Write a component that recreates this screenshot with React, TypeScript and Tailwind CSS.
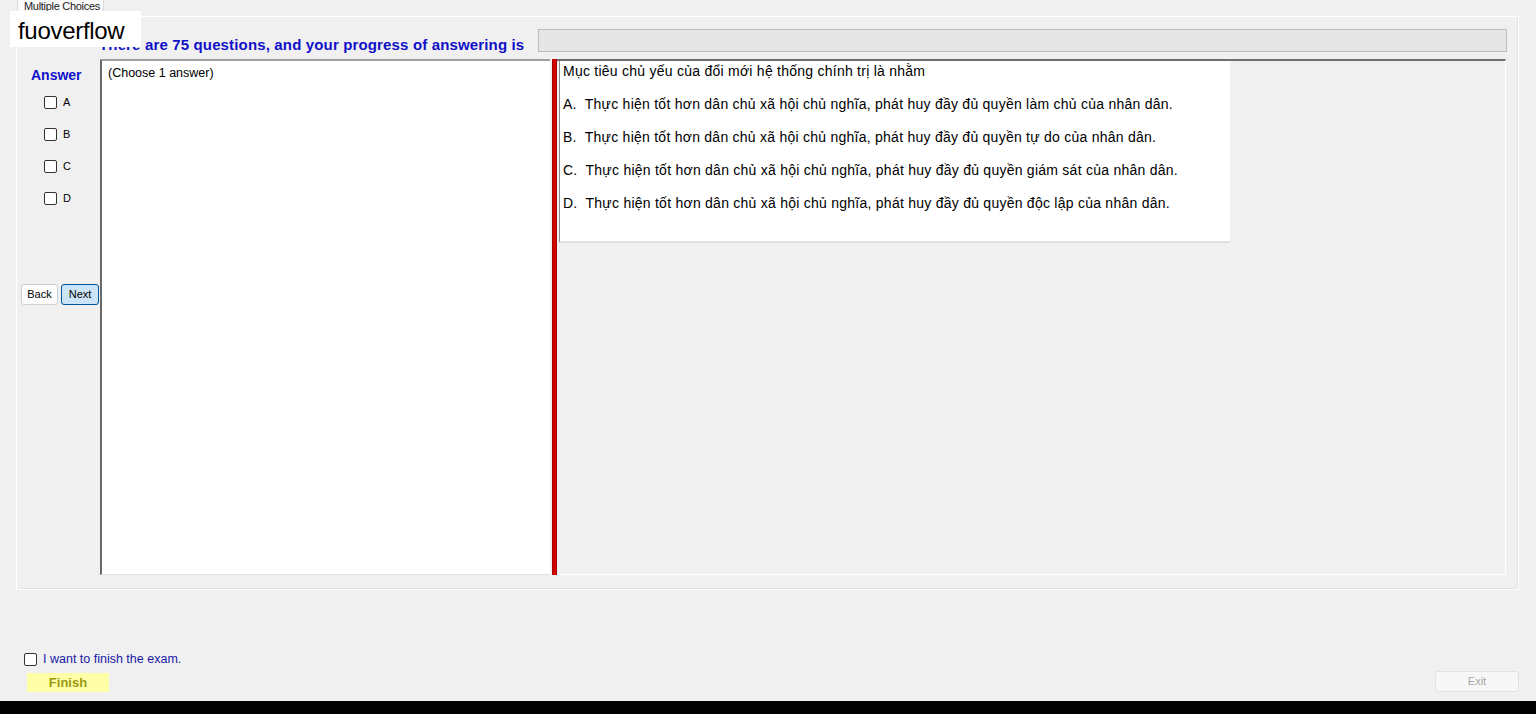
import React from 'react'

const options = [
    'A.  Thực hiện tốt hơn dân chủ xã hội chủ nghĩa, phát huy đầy đủ quyền làm chủ của nhân dân.',
    'B.  Thực hiện tốt hơn dân chủ xã hội chủ nghĩa, phát huy đầy đủ quyền tự do của nhân dân.',
    'C.  Thực hiện tốt hơn dân chủ xã hội chủ nghĩa, phát huy đầy đủ quyền giám sát của nhân dân.',
    'D.  Thực hiện tốt hơn dân chủ xã hội chủ nghĩa, phát huy đầy đủ quyền độc lập của nhân dân.'
]

function Box() {
    return <span className="block w-[13px] h-[13px] border border-[#333] rounded-[2px] bg-white" />
}

export default function App() {
    return (
        <div className="relative h-[714px] w-full bg-[#f0f0f0] flex flex-col overflow-hidden font-['Liberation_Sans',Arial,sans-serif] text-black">
            {/* tab header */}
            <div className="h-[16px] pl-[17px] flex">
                <div className="w-[87px] h-[16px] bg-[#f9f9f9] border-x border-[#dadada] text-[11px] leading-[12px] text-[#222] pl-[6px] tracking-[-0.3px]">
                    Multiple Choices
                </div>
            </div>

            {/* overlay label */}
            <div className="absolute left-[10px] top-[11px] w-[131px] h-[36px] bg-white text-[24px] leading-[36px] pl-[8px] pt-[2px] tracking-[-0.3px] z-10">
                fuoverflow
            </div>

            {/* tab page */}
            <div className="ml-[16px] mr-[17px] h-[574px] border border-white shadow-[inset_-1px_-1px_0_#e3e3e3] flex flex-col">
                <div className="h-[42px] flex items-start pt-[12px]">
                    <div className="w-[82px]" />
                    <div className="w-[423px] mt-[4px] text-[15px] font-bold text-[#1010c8] leading-[23px] tracking-[0.15px] whitespace-nowrap">
                        There are 75 questions, and your progress of answering is
                    </div>
                    <div className="ml-[16px] w-[969px] h-[23px] bg-[#e6e6e6] border border-[#bcbcbc]" />
                </div>

                <div className="flex h-[516px]">
                    {/* answer column */}
                    <div className="w-[83px] flex flex-col">
                        <div className="pl-[14px] pt-[8px] text-[14px] font-bold text-[#1010c8] leading-[16px]">Answer</div>
                        <div className="flex flex-col gap-[19px] pl-[27px] pt-[13px]">
                            {['A', 'B', 'C', 'D'].map(l => (
                                <div key={l} className="flex items-center gap-[6px] h-[13px] text-[11px]">
                                    <Box />
                                    <span>{l}</span>
                                </div>
                            ))}
                        </div>
                        <div className="flex gap-[3px] pl-[4px] mt-[79px]">
                            <div className="w-[37px] h-[21px] bg-[#fdfdfd] border border-[#cfcfcf] rounded-[3px] text-[11px] leading-[19px] text-center">Back</div>
                            <div className="w-[38px] h-[21px] bg-[#cce4f7] border border-[#005499] rounded-[3px] text-[11px] leading-[19px] text-center">Next</div>
                        </div>
                    </div>

                    {/* hint box */}
                    <div className="w-[450px] bg-white border-l-2 border-t-2 border-l-[#696969] border-t-[#a0a0a0] border-b border-b-[#e3e3e3] pl-[6px] pt-[5px] text-[12.5px] leading-[14px]">
                        (Choose 1 answer)
                    </div>

                    {/* splitter */}
                    <div className="ml-[2px] w-[5px] bg-[#d40000] border-x border-[#a00000]" />

                    {/* question panel */}
                    <div className="flex-1 mr-[12px] border-t-2 border-t-[#6e6e6e] border-r border-r-white border-b border-b-white">
                        <div className="ml-[2px] w-[671px] h-[182px] bg-white border-l border-l-[#8a8a8a] border-b-2 border-b-[#e0e0e0] pl-[3px] pt-[2px] text-[14px] leading-[16px] tracking-[0.25px]">
                            <div>Mục tiêu chủ yếu của đổi mới hệ thống chính trị là nhằm</div>
                            <div className="flex flex-col gap-[17px] mt-[17px]">
                                {options.map(o => (
                                    <div key={o} className="whitespace-pre">{o}</div>
                                ))}
                            </div>
                        </div>
                    </div>
                </div>
            </div>

            {/* footer */}
            <div className="flex-1 flex flex-col pl-[24px] pr-[17px] pt-[62px]">
                <div className="flex items-center gap-[6px] h-[14px]">
                    <Box />
                    <span className="text-[12.5px] text-[#1a1aa8]">I want to finish the exam.</span>
                </div>
                <div className="flex justify-between items-start mt-[5px]">
                    <div className="ml-[3px] mt-[2px] w-[82px] h-[19px] bg-[#ffffa8] text-[13px] font-bold text-[#9a9a10] text-center leading-[19px]">Finish</div>
                    <div className="w-[84px] h-[21px] bg-[#f7f7f7] border border-[#e2e2e2] rounded-[3px] text-[11px] text-[#a8a8a8] text-center leading-[19px]">Exit</div>
                </div>
            </div>

            <div className="h-[13px] bg-black" />
        </div>
    )
}
